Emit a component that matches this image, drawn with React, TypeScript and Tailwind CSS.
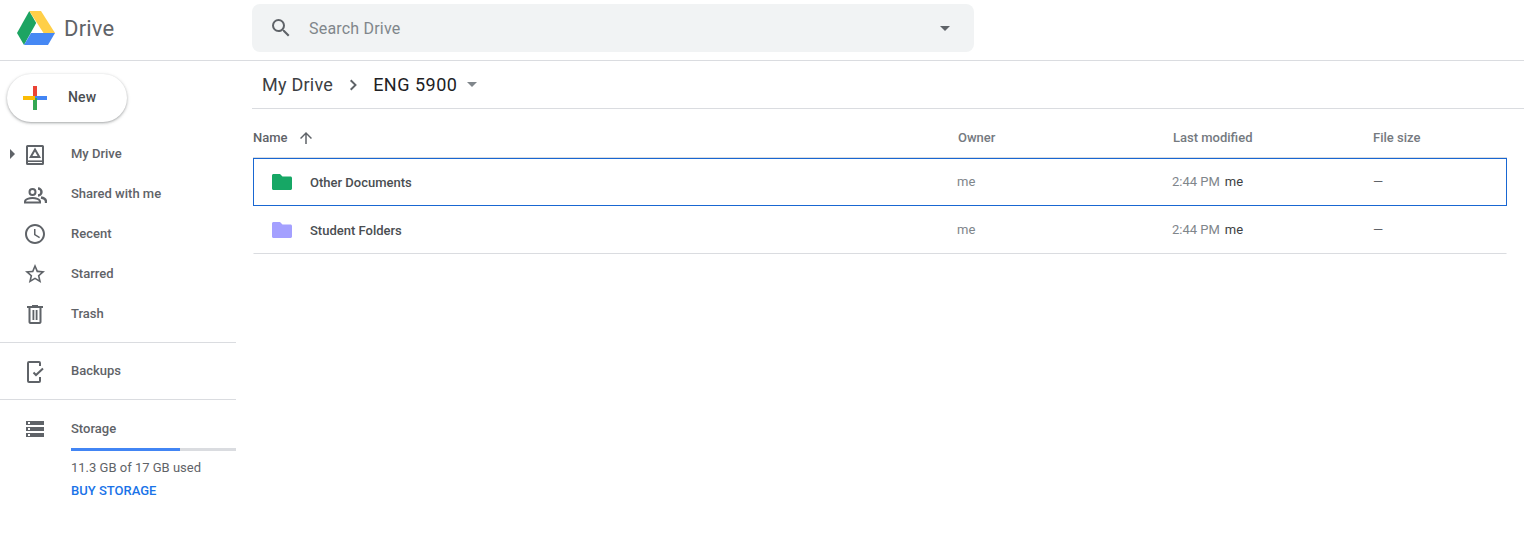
const navItems = ['My Drive', 'Shared with me', 'Recent', 'Starred', 'Trash'];

const iconPaths: Record<string, string> = {
	clock:
		'M11.99 2C6.47 2 2 6.48 2 12s4.47 10 9.99 10C17.52 22 22 17.52 22 12S17.52 2 11.99 2zM12 20c-4.42 0-8-3.58-8-8s3.58-8 8-8 8 3.58 8 8-3.58 8-8 8zm.5-13H11v6l5.25 3.15.75-1.23-4.5-2.67z',
	star: 'M22 9.24l-7.19-.62L12 2 9.19 8.63 2 9.24l5.46 4.73L5.82 21 12 17.27 18.18 21l-1.63-7.03L22 9.24zM12 15.4l-3.76 2.27 1-4.28-3.32-2.88 4.38-.38L12 6.1l1.71 4.04 4.38.38-3.32 2.88 1 4.28L12 15.4z',
	trash:
		'M15 4V3H9v1H4v2h1.500v14c0 1.100.9 2 2 2h9c1.100 0 2-.9 2-2V6H20V4h-5zM16.500 20h-9V6h9v14zM9.500 8h1.800v10H9.500zm3.200 0h1.800v10h-1.800z',
	storage:
		'M3 4h18v4H3V4zm2 1v2h2V5H5zM3 10h18v4H3v-4zm2 1v2h2v-2H5zM3 16h18v4H3v-4zm2 1v2h2v-2H5z',
};

const Icon = ({ name }: { name: string }) => (
	<svg viewBox="0 0 24 24" className="h-6 w-6" fill="currentColor">
		<path d={iconPaths[name]} fillRule="evenodd" />
	</svg>
);

const MyDriveIcon = () => (
	<svg viewBox="0 0 24 24" className="h-6 w-6" fill="none" stroke="currentColor" strokeWidth="2">
		<rect x="4" y="4" width="16" height="18" rx="0.5" />
		<path d="M4 19.200h16" strokeWidth="1.600" />
		<path d="M12 7.500l4.300 7.500H7.700z" strokeWidth="2" />
	</svg>
);

const PeopleIcon = () => (
	<svg viewBox="0 0 24 24" className="h-6 w-6" fill="none" stroke="currentColor" strokeWidth="2">
		<circle cx="9.500" cy="10" r="3" />
		<path d="M2 20.500v-1c0-2.500 4.500-3.500 7.500-3.500s7.500 1 7.500 3.500v1z" />
		<path d="M15 6.500a3.500 3.500 0 0 1 0 7" strokeWidth="2.400" />
		<path d="M18 15.500c2.500.5 5 1.500 5 4v1.500" strokeWidth="2.400" />
	</svg>
);

const BackupIcon = () => (
	<svg viewBox="0 0 24 24" className="h-6 w-6" fill="none" stroke="currentColor" strokeWidth="2">
		<path d="M17 7V4a1 1 0 0 0-1-1H6a1 1 0 0 0-1 1v18a1 1 0 0 0 1 1h10a1 1 0 0 0 1-1v-4" />
		<path d="M10.500 13.500l2.500 2.500 7-6.500" />
	</svg>
);

const navIcons = [
	<MyDriveIcon />,
	<PeopleIcon />,
	<Icon name="clock" />,
	<Icon name="star" />,
	<Icon name="trash" />,
];

const DriveLogo = () => (
	<svg viewBox="0 0 38 34" className="h-[34px] w-[38px]">
		<polygon points="12.300,0 0,22 7,34 19.200,12" fill="#1da462" />
		<polygon points="12.300,0 24,0 38,22 26.500,22" fill="#ffcf48" />
		<polygon points="7,34 31,34 38,22 14,22" fill="#4688f4" />
	</svg>
);

const PlusIcon = () => (
	<svg viewBox="0 0 24 24" className="h-6 w-6">
		<rect x="10" y="0" width="4" height="12" fill="#ea4335" />
		<rect x="12" y="10" width="12" height="4" fill="#4285f4" />
		<rect x="10" y="12" width="4" height="12" fill="#34a853" />
		<rect x="0" y="10" width="12" height="4" fill="#fbbc05" />
	</svg>
);

const Folder = ({ color }: { color: string }) => (
	<svg viewBox="0 0 20 16" className={`h-4 w-5 ${color}`} fill="currentColor">
		<path d="M8 0H1.500C.7 0 0 .7 0 1.500V14.500C0 15.300.7 16 1.500 16h17c.8 0 1.500-.7 1.500-1.500V4c0-.8-.7-1.500-1.500-1.500H10.500L8 0z" />
	</svg>
);

const Row = ({ name, color, selected }: { name: string; color: string; selected?: boolean }) => (
	<div
		className={`flex h-12 items-center border text-[13px] ${
			selected ? 'border-[#1967d2]' : 'border-transparent border-b-[#dadce0]'
		}`}
	>
		<div className="flex w-[703px] items-center gap-[18px] pl-[18px]">
			<Folder color={color} />
			<span className="mt-[2px] font-medium text-[#4a4e52]">{name}</span>
		</div>
		<div className="w-[215px] text-[#80868b]">me</div>
		<div className="flex w-[201px] gap-[5px]">
			<span className="text-[#80868b]">2:44 PM</span>
			<span className="text-[#3c4043]">me</span>
		</div>
		<div className="text-[#5f6368]">—</div>
	</div>
);

export default function App() {
	return (
		<div className="flex h-[543px] w-[1524px] flex-col overflow-hidden bg-white font-['Roboto',sans-serif]">
			<header className="flex h-[61px] shrink-0 border-b border-[#dadce0]">
				<div className="flex w-[252px] shrink-0 items-center pb-[5px] pl-[17px]">
					<DriveLogo />
					<span className="ml-[9px] mt-[2px] text-[22px] tracking-[0.2px] text-[#5f6368]">Drive</span>
				</div>
				<div className="mt-1 flex h-12 w-[722px] items-center rounded-lg bg-[#f1f3f4] pl-[17px] pr-[17px]">
					<svg viewBox="0 0 24 24" className="h-6 w-6 text-[#5f6368]" fill="currentColor">
						<path d="M15.500 14h-.79l-.28-.27A6.470 6.470 0 0 0 16 9.500 6.500 6.500 0 1 0 9.500 16c1.610 0 3.090-.59 4.230-1.570l.27.28v.79l5 4.990L20.490 19l-4.990-5zm-6 0C7.010 14 5 11.990 5 9.500S7.010 5 9.500 5 14 7.010 14 9.500 11.990 14 9.500 14z" />
					</svg>
					<span className="ml-4 mt-[2px] text-base tracking-[0.2px] text-[#80868b]">Search Drive</span>
					<div className="ml-auto mr-[7px] h-0 w-0 border-x-[5px] border-t-[5px] border-x-transparent border-t-[#5f6368]" />
				</div>
			</header>

			<div className="flex flex-1">
				<aside className="w-[236px] shrink-0 pt-[13px]">
					<button className="ml-[7px] flex h-12 w-[120px] items-center rounded-3xl bg-white pl-4 text-sm font-medium text-[#4a4e52] shadow-[0_1px_2px_0_rgba(60,64,67,0.3),0_1px_3px_1px_rgba(60,64,67,0.15)]">
						<PlusIcon />
						<span className="mb-[2px] ml-[21px] tracking-[0.1px]">New</span>
					</button>

					<nav className="mt-3">
						{navItems.map((label, i) => (
							<div key={label} className="flex h-10 items-center text-[13px] font-medium text-[#5f6368]">
								<div className="flex w-[23px] justify-end pr-[8px]">
									{i === 0 && (
										<div className="h-0 w-0 border-y-[5px] border-l-[5px] border-y-transparent border-l-[#5f6368]" />
									)}
								</div>
								{navIcons[i]}
								<span className="ml-6">{label}</span>
							</div>
						))}
					</nav>

					<div className="mt-2 border-t border-[#dadce0] py-2">
						<div className="flex h-10 items-center pl-[23px] text-[13px] font-medium text-[#5f6368]">
							<BackupIcon />
							<span className="ml-6">Backups</span>
						</div>
					</div>

					<div className="border-t border-[#dadce0] pt-[9px]">
						<div className="flex h-10 items-center pl-[23px] text-[13px] font-medium text-[#5f6368]">
							<Icon name="storage" />
							<span className="ml-6">Storage</span>
						</div>
						<div className="-mt-px pl-[71px]">
							<div className="h-[3px] bg-[#dadce0]">
								<div className="h-[3px] w-[109px] bg-[#4285f4]" />
							</div>
							<p className="mt-[9px] text-[13px] leading-4 text-[#5f6368]">11.3 GB of 17 GB used</p>
							<p className="mt-[7px] text-[13px] font-medium leading-4 text-[#1a73e8]">BUY STORAGE</p>
						</div>
					</div>
				</aside>

				<main className="flex-1 pl-4">
					<div className="flex h-12 items-center border-b border-[#dadce0] pl-[10px] text-lg">
						<span className="tracking-[0.25px] text-[#3c4043]">My Drive</span>
						<svg viewBox="0 0 24 24" className="ml-[9px] h-6 w-6 text-[#5f6368]" fill="currentColor">
							<path d="M9.400 6.500 8 7.900l4.100 4.100L8 16.100l1.400 1.400 5.500-5.500z" />
						</svg>
						<span className="ml-[7px] tracking-[0.5px] text-[#202124]">ENG 5900</span>
						<div className="ml-[10px] h-0 w-0 border-x-[5px] border-t-[5px] border-x-transparent border-t-[#80868b]" />
					</div>

					<div className="pl-px pr-[17px]">
						<div className="flex h-[49px] items-center border-b border-[#dadce0] pt-[9px] text-[13px] font-medium text-[#757a7f]">
							<div className="flex w-[705px] items-center text-[#5f6368]">
								<span>Name</span>
								<svg viewBox="0 0 24 24" className="ml-[9px] h-[18px] w-[18px]" fill="currentColor">
									<path d="M4 12l1.410 1.410L11 7.830V20h2V7.830l5.580 5.590L20 12l-8-8-8 8z" />
								</svg>
							</div>
							<div className="w-[215px]">Owner</div>
							<div className="w-[200px]">Last modified</div>
							<div>File size</div>
						</div>
						<Row name="Other Documents" color="text-[#16a765]" selected />
						<Row name="Student Folders" color="text-[#a4a0ff]" />
					</div>
				</main>
			</div>
		</div>
	);
}
